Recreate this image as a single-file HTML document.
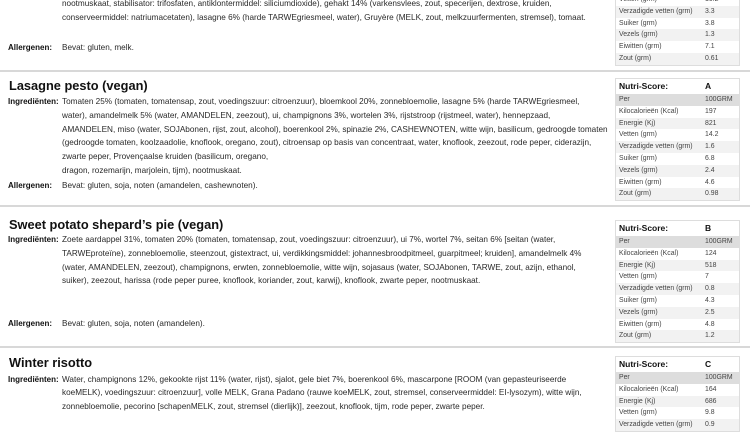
<!DOCTYPE html>
<html><head><meta charset="utf-8"><style>
*{margin:0;padding:0}
body{width:750px;height:422px;overflow:hidden;background:#fff;font-family:"Liberation Sans",sans-serif;color:#222;position:relative}
.a{position:absolute;white-space:nowrap}
.t{font-size:12.8px;font-weight:bold;color:#111;left:9px}
.l{font-size:8px;font-weight:bold;color:#111;left:8px}
.x{font-size:8.2px;left:62px;line-height:10px;color:#2a2a2a}
.sep{position:absolute;left:0;width:750px;height:2px;background:#d8d8d8}
.tb{position:absolute;left:615px;width:123px;border:1px solid #ddd;font-size:6.9px;color:#444}
.tb div{height:11.8px;line-height:11.8px;position:relative;padding-left:3px}
.tb div span{position:absolute;left:89px}
.tb .h{height:15px;line-height:15px;font-size:8.5px;font-weight:bold;color:#111}
.tb .g{background:#ddd}
.tb .w{background:#f2f2f2}
</style></head><body>

<div class="a x" style="top:-1px">nootmuskaat, stabilisator: trifosfaten, antiklontermiddel: siliciumdioxide), gehakt 14% (varkensvlees, zout, specerijen, dextrose, kruiden,</div>
<div class="a x" style="top:13px">conserveermiddel: natriumacetaten), lasagne 6% (harde TARWEgriesmeel, water), Gruyère (MELK, zout, melkzuurfermenten, stremsel), tomaat.</div>
<div class="a l" style="top:43px">Allergenen:</div>
<div class="a x" style="top:43px">Bevat: gluten, melk.</div>

<div class="tb" style="top:-6px;border-top:none">
<div>Vetten (grm)<span>10.2</span></div>
<div class="w">Verzadigde vetten (grm)<span>3.3</span></div>
<div>Suiker (grm)<span>3.8</span></div>
<div class="w">Vezels (grm)<span>1.3</span></div>
<div>Eiwitten (grm)<span>7.1</span></div>
<div class="w">Zout (grm)<span>0.61</span></div>
</div>

<div class="sep" style="top:70px"></div>

<div class="a t" style="top:78px">Lasagne pesto (vegan)</div>
<div class="a l" style="top:97px">Ingrediënten:</div>
<div class="a x" style="top:97px">Tomaten 25% (tomaten, tomatensap, zout, voedingszuur: citroenzuur), bloemkool 20%, zonnebloemolie, lasagne 5% (harde TARWEgriesmeel,</div>
<div class="a x" style="top:111px">water), amandelmelk 5% (water, AMANDELEN, zeezout), ui, champignons 3%, wortelen 3%, rijststroop (rijstmeel, water), hennepzaad,</div>
<div class="a x" style="top:125px">AMANDELEN, miso (water, SOJAbonen, rijst, zout, alcohol), boerenkool 2%, spinazie 2%, CASHEWNOTEN, witte wijn, basilicum, gedroogde tomaten</div>
<div class="a x" style="top:138px">(gedroogde tomaten, koolzaadolie, knoflook, oregano, zout), citroensap op basis van concentraat, water, knoflook, zeezout, rode peper, ciderazijn,</div>
<div class="a x" style="top:152px">zwarte peper, Provençaalse kruiden (basilicum, oregano,</div>
<div class="a x" style="top:166px">dragon, rozemarijn, marjolein, tijm), nootmuskaat.</div>
<div class="a l" style="top:181px">Allergenen:</div>
<div class="a x" style="top:181px">Bevat: gluten, soja, noten (amandelen, cashewnoten).</div>

<div class="tb" style="top:78px">
<div class="h">Nutri-Score:<span>A</span></div>
<div class="g">Per<span>100GRM</span></div>
<div>Kilocalorieën (Kcal)<span>197</span></div>
<div class="w">Energie (Kj)<span>821</span></div>
<div>Vetten (grm)<span>14.2</span></div>
<div class="w">Verzadigde vetten (grm)<span>1.6</span></div>
<div>Suiker (grm)<span>6.8</span></div>
<div class="w">Vezels (grm)<span>2.4</span></div>
<div>Eiwitten (grm)<span>4.6</span></div>
<div class="w">Zout (grm)<span>0.98</span></div>
</div>

<div class="sep" style="top:205px"></div>

<div class="a t" style="top:217px">Sweet potato shepard’s pie (vegan)</div>
<div class="a l" style="top:235px">Ingrediënten:</div>
<div class="a x" style="top:235px">Zoete aardappel 31%, tomaten 20% (tomaten, tomatensap, zout, voedingszuur: citroenzuur), ui 7%, wortel 7%, seitan 6% [seitan (water,</div>
<div class="a x" style="top:249px">TARWEproteïne), zonnebloemolie, steenzout, gistextract, ui, verdikkingsmiddel: johannesbroodpitmeel, guarpitmeel; kruiden], amandelmelk 4%</div>
<div class="a x" style="top:263px">(water, AMANDELEN, zeezout), champignons, erwten, zonnebloemolie, witte wijn, sojasaus (water, SOJAbonen, TARWE, zout, azijn, ethanol,</div>
<div class="a x" style="top:276px">suiker), zeezout, harissa (rode peper puree, knoflook, koriander, zout, karwij), knoflook, zwarte peper, nootmuskaat.</div>
<div class="a l" style="top:319px">Allergenen:</div>
<div class="a x" style="top:319px">Bevat: gluten, soja, noten (amandelen).</div>

<div class="tb" style="top:220px">
<div class="h">Nutri-Score:<span>B</span></div>
<div class="g">Per<span>100GRM</span></div>
<div>Kilocalorieën (Kcal)<span>124</span></div>
<div class="w">Energie (Kj)<span>518</span></div>
<div>Vetten (grm)<span>7</span></div>
<div class="w">Verzadigde vetten (grm)<span>0.8</span></div>
<div>Suiker (grm)<span>4.3</span></div>
<div class="w">Vezels (grm)<span>2.5</span></div>
<div>Eiwitten (grm)<span>4.8</span></div>
<div class="w">Zout (grm)<span>1.2</span></div>
</div>

<div class="sep" style="top:346px"></div>

<div class="a t" style="top:355px">Winter risotto</div>
<div class="a l" style="top:375px">Ingrediënten:</div>
<div class="a x" style="top:375px">Water, champignons 12%, gekookte rijst 11% (water, rijst), sjalot, gele biet 7%, boerenkool 6%, mascarpone [ROOM (van gepasteuriseerde</div>
<div class="a x" style="top:388px">koeMELK), voedingszuur: citroenzuur], volle MELK, Grana Padano (rauwe koeMELK, zout, stremsel, conserveermiddel: EI-lysozym), witte wijn,</div>
<div class="a x" style="top:402px">zonnebloemolie, pecorino [schapenMELK, zout, stremsel (dierlijk)], zeezout, knoflook, tijm, rode peper, zwarte peper.</div>

<div class="tb" style="top:356px">
<div class="h">Nutri-Score:<span>C</span></div>
<div class="g">Per<span>100GRM</span></div>
<div>Kilocalorieën (Kcal)<span>164</span></div>
<div class="w">Energie (Kj)<span>686</span></div>
<div>Vetten (grm)<span>9.8</span></div>
<div class="w">Verzadigde vetten (grm)<span>0.9</span></div>
</div>

</body></html>
